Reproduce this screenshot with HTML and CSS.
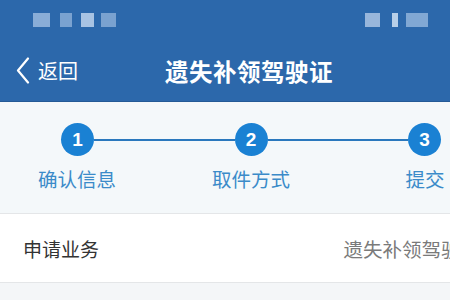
FILE: index.html
```html
<!DOCTYPE html>
<html lang="zh">
<head>
    <meta charset="UTF-8">
    <meta name="viewport" content="width=device-width, initial-scale=1.0">
    <title>遗失补领驾驶证</title>
    <link rel="stylesheet" href="styles.css">
</head>
<body>
    <header class="top">
        <div class="status">
            <div class="status-left">
                <span class="blk b1"></span>
                <span class="blk b2"></span>
                <span class="blk b3"></span>
                <span class="blk b4"></span>
            </div>
            <div class="status-right">
                <span class="blk b5"></span>
                <span class="blk b6"></span>
                <span class="blk b7"></span>
            </div>
        </div>
        <div class="nav">
            <a class="back" href="#">
                <svg width="14" height="27" viewBox="0 0 14 27">
                    <path d="M12 1.5 L2 13.5 L12 25.5" fill="none" stroke="#fff" stroke-width="2.2" stroke-linecap="round" stroke-linejoin="round"/>
                </svg>
                <span>返回</span>
            </a>
            <h1 class="title">遗失补领驾驶证</h1>
        </div>
    </header>

    <section class="steps">
        <div class="steps-inner">
            <div class="track">
                <span class="dot">1</span>
                <span class="bar"></span>
                <span class="dot">2</span>
                <span class="bar"></span>
                <span class="dot">3</span>
            </div>
            <div class="labels">
                <span>确认信息</span>
                <span>取件方式</span>
                <span>提交</span>
            </div>
        </div>
    </section>

    <div class="row">
        <span class="row-label">申请业务</span>
        <span class="row-value">遗失补领驾驶证</span>
    </div>
</body>
</html>
```

FILE: styles.css
```css
* {
    margin: 0;
    padding: 0;
    box-sizing: border-box;
}

html,
body {
    overflow: hidden;
}

body {
    font-family: "Noto Sans CJK SC", "Noto Sans", sans-serif;
    background: #f4f6f8;
    width: 450px;
}

.top {
    background-color: #2c68ab;
    border-bottom: 1px solid #245a96;
    color: white;
}

.status {
    height: 42px;
    display: flex;
    justify-content: space-between;
    align-items: flex-start;
    padding: 13px 22px 0 33px;
}

.status-left,
.status-right {
    display: flex;
    align-items: flex-start;
}

.blk {
    display: inline-block;
    height: 14px;
    background: rgba(200, 220, 245, 0.6);
}

.b1 { width: 17px; margin-right: 10px; }
.b2 { width: 12px; margin-right: 9px; background: rgba(200, 220, 245, 0.5); }
.b3 { width: 13px; margin-right: 7px; background: rgba(210, 225, 245, 0.75); }
.b4 { width: 15px; background: rgba(200, 220, 245, 0.5); }
.b5 { width: 15px; margin-right: 12px; background: rgba(210, 225, 245, 0.65); }
.b6 { width: 6px; margin-right: 8px; background: rgba(220, 232, 248, 0.8); }
.b7 { width: 22px; background: rgba(200, 220, 245, 0.55); }

.nav {
    height: 59px;
    position: relative;
    display: flex;
    align-items: center;
    padding-bottom: 2px;
}

.back {
    display: flex;
    align-items: center;
    color: white;
    text-decoration: none;
    padding-left: 16px;
    font-size: 20px;
    z-index: 1;
}

.back span {
    margin-left: 8px;
}

.title {
    position: absolute;
    left: 0;
    right: 0;
    top: 0;
    bottom: 2px;
    display: flex;
    align-items: center;
    justify-content: center;
    padding-left: 48px;
    font-size: 23.5px;
    font-weight: bold;
    letter-spacing: 0.5px;
}

.steps {
    background: #f4f8fa;
    height: 112px;
    border-bottom: 1px solid #e4e6e8;
    padding-top: 21px;
    overflow: hidden;
}

.steps-inner {
    width: 522px;
    margin-left: -10px;
}

.track {
    display: flex;
    align-items: center;
    padding: 0 71px 0 71px;
}

.dot {
    width: 33px;
    height: 33px;
    border-radius: 50%;
    background: #1a81d3;
    color: white;
    font-family: "Liberation Sans", sans-serif;
    font-weight: bold;
    font-size: 19px;
    display: flex;
    align-items: center;
    justify-content: center;
    flex-shrink: 0;
}

.bar {
    flex: 1;
    height: 2px;
    background: #2a78bd;
}

.labels {
    display: grid;
    grid-template-columns: 174px 174px 174px;
    margin-top: 8px;
    text-align: center;
    color: #3b8bc9;
    font-size: 19.5px;
}

.row {
    background: white;
    height: 69px;
    border-bottom: 1px solid #e4e6e8;
    display: flex;
    align-items: center;
    justify-content: space-between;
    white-space: nowrap;
    overflow: hidden;
}

.row-label {
    padding-left: 23px;
    font-size: 19px;
    color: #333;
}

.row-value {
    font-size: 19.5px;
    color: #7a7a7a;
    margin-right: -30px;
}
```
